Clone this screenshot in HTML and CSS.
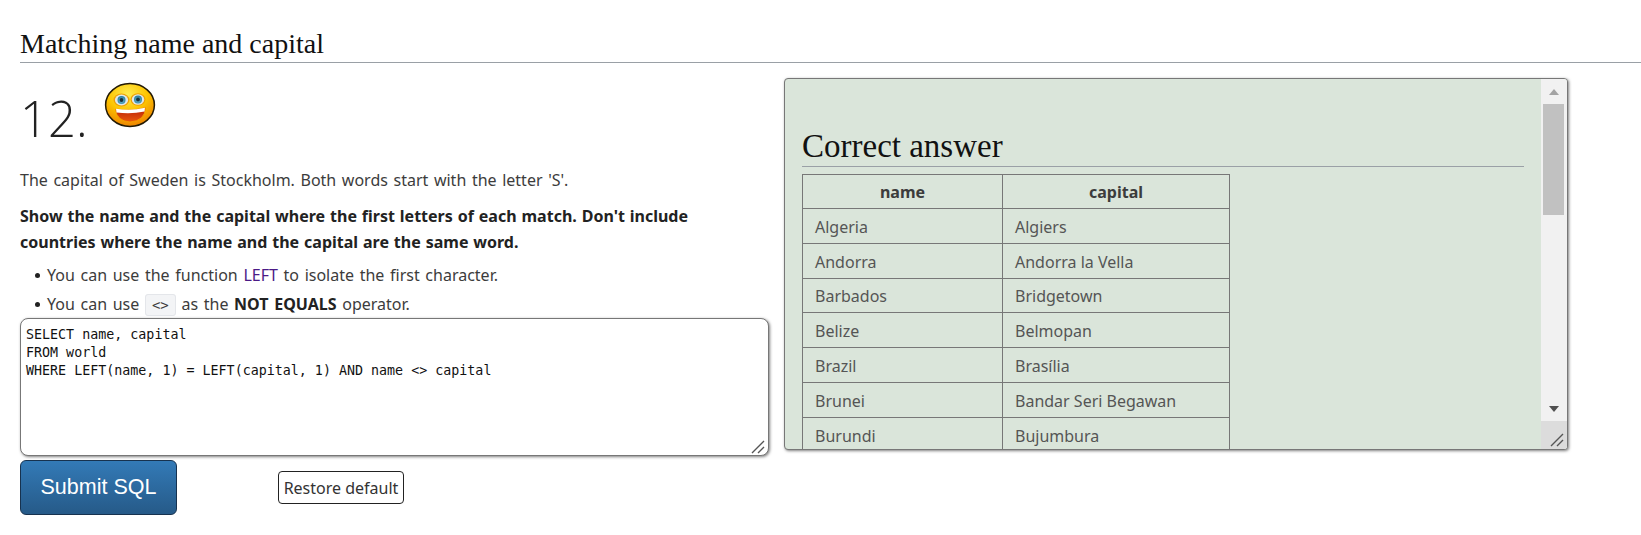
FILE: index.html
```html
<!DOCTYPE html>
<html lang="en">
<head>
<meta charset="utf-8">
<title>Matching name and capital</title>
<link rel="stylesheet" href="styles.css">
</head>
<body>
<h2 class="section-title">Matching name and capital</h2>
<div class="columns">
  <div class="question">
    <div class="qnum"><span class="qnum-text">12.</span>
      <svg class="smiley" width="52" height="46" viewBox="0 0 52 46" aria-hidden="true">
        <defs>
          <radialGradient id="face" cx="45%" cy="25%" r="80%">
            <stop offset="0" stop-color="#ffec50"/>
            <stop offset="0.5" stop-color="#fdc400"/>
            <stop offset="1" stop-color="#ea7a00"/>
          </radialGradient>
          <linearGradient id="mouth" x1="0" y1="0" x2="0" y2="1">
            <stop offset="0" stop-color="#b81e08"/>
            <stop offset="1" stop-color="#e8580c"/>
          </linearGradient>
          <radialGradient id="iris" cx="50%" cy="60%" r="55%">
            <stop offset="0" stop-color="#6fc0d8"/>
            <stop offset="1" stop-color="#2c7f9e"/>
          </radialGradient>
        </defs>
        <ellipse cx="26" cy="23" rx="24.400" ry="21.400" fill="url(#face)" stroke="#231a05" stroke-width="1.500"/>
        <ellipse cx="17.500" cy="18" rx="8" ry="6.500" fill="#f0a000"/>
        <ellipse cx="34" cy="17.500" rx="7.500" ry="6.200" fill="#f0a000"/>
        <ellipse cx="17.500" cy="18" rx="6.600" ry="5.400" fill="#dfe8e8"/>
        <ellipse cx="34" cy="17.500" rx="6.200" ry="5.200" fill="#dfe8e8"/>
        <circle cx="17.500" cy="18" r="4" fill="url(#iris)"/>
        <circle cx="34" cy="17.500" r="4" fill="url(#iris)"/>
        <circle cx="17.500" cy="18" r="1.900" fill="#16313d"/>
        <circle cx="34" cy="17.500" r="1.900" fill="#16313d"/>
        <path d="M11.500 27 Q27 29.500 41.500 25.500 Q41 39 26 40 Q12.500 39 11.500 27Z" fill="url(#mouth)" stroke="#f7a000" stroke-width="0.800"/>
        <path d="M12 26.800 Q27 29 41 25.800 L40.500 29.500 Q27 32.500 12.500 30.500Z" fill="#fff"/>
      </svg>
    </div>
    <p class="intro">The capital of Sweden is Stockholm. Both words start with the letter 'S'.</p>
    <p class="task">Show the name and the capital where the first letters of each match. Don't include countries where the name and the capital are the same word.</p>
    <ul class="hints">
      <li>You can use the function <a class="fn" href="#">LEFT</a> to isolate the first character.</li>
      <li>You can use <code class="op">&lt;&gt;</code> as the <b>NOT EQUALS</b> operator.</li>
    </ul>
    <div class="sql-wrap">
      <textarea class="sql" spellcheck="false">SELECT name, capital
FROM world
WHERE LEFT(name, 1) = LEFT(capital, 1) AND name &lt;&gt; capital</textarea>
      <svg class="grip" width="14" height="14" viewBox="0 0 14 14" aria-hidden="true"><path d="M1 13 13 1M7 13 13 7" stroke="#555" stroke-width="1.400" fill="none"/></svg>
    </div>
    <div class="actions">
      <button class="submit" type="button">Submit SQL</button>
      <button class="restore" type="button">Restore default</button>
    </div>
  </div>
  <div class="answer">
    <div class="answer-body">
      <h2 class="answer-title">Correct answer</h2>
      <table class="results">
        <tr><th class="col-name">name</th><th class="col-capital">capital</th></tr>
        <tr><td>Algeria</td><td>Algiers</td></tr>
        <tr><td>Andorra</td><td>Andorra la Vella</td></tr>
        <tr><td>Barbados</td><td>Bridgetown</td></tr>
        <tr><td>Belize</td><td>Belmopan</td></tr>
        <tr><td>Brazil</td><td>Brasília</td></tr>
        <tr><td>Brunei</td><td>Bandar Seri Begawan</td></tr>
        <tr><td>Burundi</td><td>Bujumbura</td></tr>
      </table>
    </div>
    <div class="scrollbar">
      <span class="arrow-up"></span>
      <span class="thumb"></span>
      <span class="track"></span>
      <span class="arrow-down"></span>
      <span class="corner">
        <svg width="14" height="14" viewBox="0 0 14 14" aria-hidden="true"><path d="M1 13 13 1M7 13 13 7" stroke="#555" stroke-width="1.400" fill="none"/></svg>
      </span>
    </div>
  </div>
</div>
</body>
</html>
```
FILE: styles.css
```css
html, body { margin: 0; padding: 0; background: #fff; }
body {
  height: 535px;
  overflow: hidden;
  font-family: "Noto Sans", "Open Sans", sans-serif;
  font-size: 16px;
  color: #3c3c3c;
}
.section-title {
  margin: 0 0 0 20px;
  padding-top: 27px;
  height: 35px;
  border-bottom: 1px solid #9aa0a6;
  font-family: "Liberation Serif", Georgia, serif;
  font-weight: 400;
  font-size: 28px;
  line-height: 34px;
  color: #111;
}
.columns {
  display: grid;
  grid-template-columns: 749px 784px;
  column-gap: 15px;
  padding: 15px 0 0 20px;
}
.qnum {
  display: flex;
  align-items: flex-start;
  height: 91px;
}
.qnum-text {
  font-family: "Open Sans", "Noto Sans", sans-serif;
  font-weight: 300;
  font-size: 49px;
  line-height: 50px;
  margin-top: 15px;
  color: #222;
}
.smiley { margin: 4px 0 0 16px; }
.intro { margin: 0 0 12px; line-height: 22px; height: 22px; word-spacing: 1.450px; }
.task {
  margin: 0 0 5px;
  font-weight: 700;
  line-height: 26px;
  color: #222;
  width: 700px;
  word-spacing: 0.750px;
}
.hints { margin: 0; padding: 0 0 0 27px; line-height: 22px; list-style: none; word-spacing: 1.500px; }
.hints li { height: 29px; padding-top: 4px; box-sizing: border-box; }
.hints li::before {
  content: "";
  display: inline-block;
  width: 5px;
  height: 5px;
  border-radius: 50%;
  background: #222;
  margin: 0 7px 2px -12px;
  vertical-align: middle;
}
.fn { color: #4b1a86; text-decoration: none; }
.op {
  font-family: "DejaVu Sans Mono", monospace;
  font-size: 14px;
  background: #f3f4f6;
  border: 1px solid #e4e6ea;
  border-radius: 3px;
  padding: 2px 6px;
  word-spacing: 0;
}
.hints b { color: #222; }
.sql-wrap { position: relative; width: 749px; height: 138px; }
.sql {
  display: block;
  box-sizing: border-box;
  width: 749px;
  height: 138px;
  margin: 0;
  padding: 7px 5px;
  border: 1px solid #777;
  border-radius: 8px;
  box-shadow: 1px 1px 3px rgba(0,0,0,.5);
  font-family: "DejaVu Sans Mono", monospace;
  font-size: 13.330px;
  line-height: 18px;
  color: #111;
  outline: 0;
  resize: none;
}
.grip { position: absolute; right: 4px; bottom: 2px; }
.actions { display: flex; align-items: flex-start; margin-top: 4px; }
.submit {
  width: 157px;
  height: 55px;
  border: 1px solid #17324f;
  border-radius: 6px;
  background: linear-gradient(#337ab7, #265a88);
  color: #fff;
  font-family: "Liberation Sans", Arial, sans-serif;
  font-size: 21.500px;
}
.restore {
  margin: 11px 0 0 101px;
  width: 126px;
  height: 33px;
  padding: 0;
  background: #fff;
  border: 1px solid #222;
  border-radius: 4px;
  color: #333;
  font-family: "Noto Sans", sans-serif;
  font-size: 16px;
}
.answer {
  display: flex;
  height: 372px;
  box-sizing: border-box;
  border: 1px solid #777;
  border-radius: 4px;
  box-shadow: 1px 1px 3px rgba(0,0,0,.5);
  background: #dae5da;
  overflow: hidden;
}
.answer-body {
  flex: 1;
  min-width: 0;
  overflow: hidden;
  padding: 50px 17px 0 17px;
}
.answer-title {
  margin: 0 0 7px;
  height: 37px;
  border-bottom: 1px solid #9aa0a6;
  font-family: "Liberation Serif", Georgia, serif;
  font-weight: 400;
  font-size: 33px;
  line-height: 34px;
  color: #111;
}
.results { border-collapse: collapse; table-layout: fixed; width: 428px; }
.col-name { width: 200px; }
.results th, .results td {
  border: 1px solid #777;
  height: 34.800px;
  padding: 2px 12px 0;
  box-sizing: border-box;
  line-height: 20px;
}
.results th { height: 34px; padding-top: 0; text-align: center; font-weight: 700; color: #3c3c3c; }
.results td { color: #555; }
.scrollbar {
  flex: 0 0 26px;
  display: flex;
  flex-direction: column;
  background: #f1f1f1;
}
.arrow-up {
  margin: 10px auto 9px;
  width: 0; height: 0;
  border: 5.500px solid transparent;
  border-top: 0;
  border-bottom: 6px solid #a3a3a3;
}
.thumb { height: 111px; margin: 0 3px 0 2px; background: #c1c1c1; flex: none; }
.track { flex: 1; }
.arrow-down {
  margin: 0 auto 9px;
  width: 0; height: 0;
  border: 5.500px solid transparent;
  border-bottom: 0;
  border-top: 6px solid #505050;
}
.corner {
  height: 26px;
  background: #dcdcdc;
  display: flex;
  align-items: flex-end;
  justify-content: flex-end;
  padding: 0 3px 2px 0;
}
```
